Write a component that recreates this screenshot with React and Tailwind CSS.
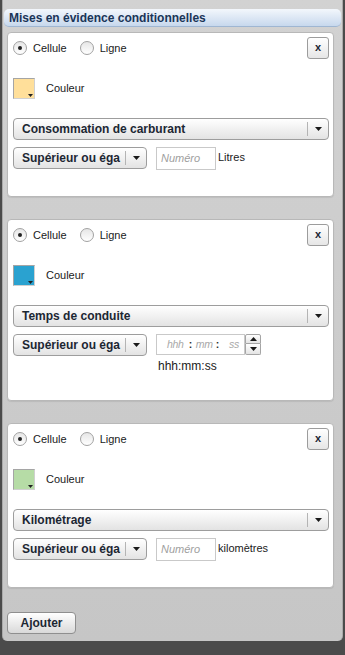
import React from 'react';

const rules = [
  { color: 'bg-[#ffdf9a]', field: 'Consommation de carburant', kind: 'number', unit: 'Litres' },
  { color: 'bg-[#2aa2d0]', field: 'Temps de conduite', kind: 'time' },
  { color: 'bg-[#b6dca6]', field: 'Kilométrage', kind: 'number', unit: 'kilomètres' },
];

function Arrow() {
  return (
    <svg width="7" height="4" viewBox="0 0 7 4">
      <polygon points="0,0 7,0 3.5,4" fill="#1a1a1a" />
    </svg>
  );
}

function Radio({ checked, label }) {
  return (
    <div className="flex items-center">
      <span className="w-[14px] h-[14px] rounded-full border border-[#a2a2a2] bg-linear-to-b from-[#e6e6e6] to-white flex items-center justify-center">
        {checked && <span className="w-[4px] h-[4px] rounded-full bg-[#222]" />}
      </span>
      <span className="ml-[6px] text-[11px] text-[#1a1a1a]">{label}</span>
    </div>
  );
}

function Select({ label, width }) {
  return (
    <div className={`${width} h-[22px] flex items-center rounded-[4px] border border-[#9d9d9d] bg-linear-to-b from-white to-[#e3e3e3]`}>
      <span className="flex-1 pl-[8px] font-bold text-[12px] text-[#1c2733] whitespace-nowrap overflow-hidden">{label}</span>
      <span className="w-px h-[14px] bg-[#b4b4b4]" />
      <span className="w-[20px] flex justify-center">
        <Arrow />
      </span>
    </div>
  );
}

function Swatch({ color }) {
  return (
    <div className="flex items-center">
      <div className={`relative w-[22px] h-[21px] border border-[#a5a5a5] border-r-[#d0d0d0] border-b-[#d0d0d0] ${color}`}>
        <svg className="absolute right-[1px] bottom-[1px]" width="5" height="3" viewBox="0 0 5 3">
          <polygon points="0,0 5,0 2.5,3" fill="#222" />
        </svg>
      </div>
      <span className="ml-[11px] text-[11px] text-[#1a1a1a]">Couleur</span>
    </div>
  );
}

function NumberValue({ unit }) {
  return (
    <div className="flex items-start">
      <div className="w-[60px] h-[23px] border border-[#c9c9c9] bg-white flex items-center pl-[4px]">
        <span className="italic text-[11px] text-[#a0a0a0]">Numéro</span>
      </div>
      <span className="ml-[2px] mt-[2px] text-[11px] text-[#1a1a1a]">{unit}</span>
    </div>
  );
}

function TimeValue() {
  return (
    <div className="flex flex-col">
      <div className="flex">
        <div className="w-[89px] h-[21px] border border-[#c9c9c9] bg-white flex items-center pl-[10px] text-[10.5px] tracking-[-0.3px]">
          <span className="italic text-[#a8a8a8]">hhh</span>
          <span className="ml-[5px] font-bold text-[#333]">:</span>
          <span className="ml-[4px] italic text-[#a8a8a8]">mm</span>
          <span className="ml-[3px] font-bold text-[#333]">:</span>
          <span className="ml-[10px] italic text-[#a8a8a8]">ss</span>
        </div>
        <div className="flex flex-col w-[16px] h-[21px]">
          <span className="h-[10px] border border-[#a5a5a5] rounded-t-[2px] bg-linear-to-b from-white to-[#e4e4e4] flex items-center justify-center">
            <svg width="7" height="4" viewBox="0 0 7 4"><polygon points="0,4 7,4 3.5,0" fill="#1a1a1a" /></svg>
          </span>
          <span className="h-[11px] border border-t-0 border-[#a5a5a5] rounded-b-[2px] bg-linear-to-b from-white to-[#e4e4e4] flex items-center justify-center">
            <Arrow />
          </span>
        </div>
      </div>
      <span className="mt-[3px] leading-[16px] ml-[2px] text-[12px] text-[#1a1a1a]">hhh:mm:ss</span>
    </div>
  );
}

function RuleCard({ rule }) {
  return (
    <div className="w-[327px] rounded-[4px] border border-[#b8b8b8] bg-white pt-[4px] pb-[26px] pl-[5px] pr-[4px] shadow-[0_1px_1px_rgba(0,0,0,0.08)]">
      <div className="flex items-center justify-between h-[22px]">
        <div className="flex items-center gap-[13px]">
          <Radio checked label="Cellule" />
          <Radio label="Ligne" />
        </div>
        <button className="w-[22px] h-[22px] rounded-[3px] border border-[#9c9c9c] bg-linear-to-b from-white to-[#e6e6e6] flex items-center justify-center text-[11px] font-bold text-[#1c2733] leading-none pb-[2px]">
          x
        </button>
      </div>
      <div className="mt-[19px]">
        <Swatch color={rule.color} />
      </div>
      <div className="mt-[19px]">
        <Select label={rule.field} width="w-[316px]" />
      </div>
      <div className="mt-[7px] flex items-start">
        <Select label="Supérieur ou éga" width="w-[134px]" />
        <div className="ml-[9px]">
          {rule.kind === 'time' ? <TimeValue /> : <NumberValue unit={rule.unit} />}
        </div>
      </div>
    </div>
  );
}

export default function App() {
  return (
    <div className="w-[345px] h-[655px] bg-[#4b4b4b] font-['Liberation_Sans',sans-serif]">
      <div className="ml-[2px] mr-[2px] h-[641px] rounded-b-[5px] bg-linear-to-b from-[#d2d2d2] to-[#c6c6c6] border-l border-r border-[#aaaaaa] pt-[9px]">
        <div className="mx-[1px] h-[18px] rounded-[5px] border-b border-[#9fb6d2] bg-linear-to-b from-[#f3f7fc] to-[#c7d8ed] flex items-center pl-[5px]">
          <span className="text-[12px] font-bold text-[#1a3558]">Mises en évidence conditionnelles</span>
        </div>
        <div className="pl-[4px] pt-[5px] flex flex-col gap-[22px]">
          {rules.map((rule) => (
            <RuleCard key={rule.field} rule={rule} />
          ))}
        </div>
        <div className="pl-[4px] mt-[22px]">
          <button className="w-[69px] h-[22px] rounded-[4px] border border-[#8f8f8f] bg-linear-to-b from-white to-[#d9d9d9] text-[12px] font-bold text-[#1c2733]">
            Ajouter
          </button>
        </div>
      </div>
    </div>
  );
}
